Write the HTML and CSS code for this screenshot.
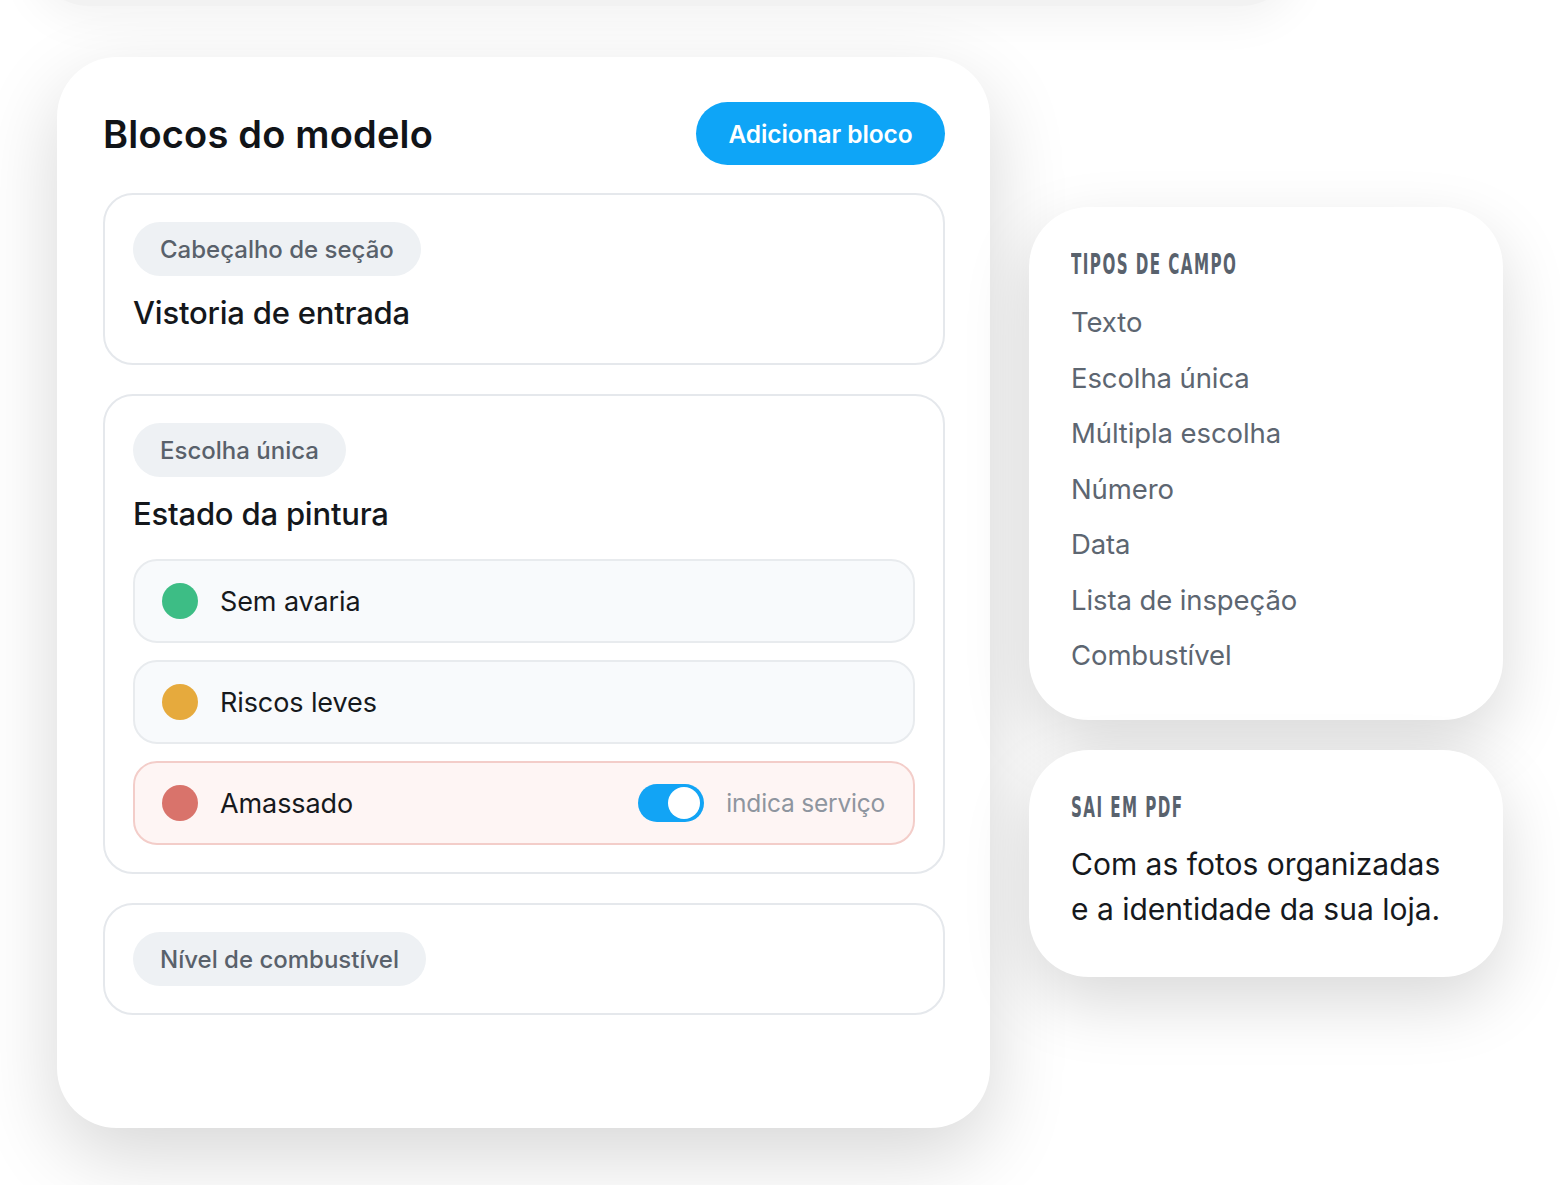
FILE: index.html
```html
<!DOCTYPE html>
<html lang="pt">
<head>
<meta charset="utf-8">
<title>Blocos do modelo</title>
<link rel="stylesheet" href="styles.css">
</head>
<body>
<div class="top-shade"></div>
<div class="stage">
  <section class="main-card">
    <header class="main-head">
      <h1 class="main-title">Blocos do modelo</h1>
      <button class="add-btn">Adicionar bloco</button>
    </header>
    <div class="blocks">
      <div class="block">
        <span class="chip">Cabeçalho de seção</span>
        <div class="block-title">Vistoria de entrada</div>
      </div>
      <div class="block">
        <span class="chip">Escolha única</span>
        <div class="block-title">Estado da pintura</div>
        <div class="options">
          <div class="option">
            <span class="dot dot-green"></span>
            <span class="option-label">Sem avaria</span>
          </div>
          <div class="option">
            <span class="dot dot-orange"></span>
            <span class="option-label">Riscos leves</span>
          </div>
          <div class="option option-alert">
            <span class="dot dot-red"></span>
            <span class="option-label">Amassado</span>
            <span class="toggle"><span class="knob"></span></span>
            <span class="toggle-label">indica serviço</span>
          </div>
        </div>
      </div>
      <div class="block">
        <span class="chip">Nível de combustível</span>
      </div>
    </div>
  </section>
  <aside class="side">
    <div class="side-card types">
      <div class="side-label">TIPOS DE CAMPO</div>
      <ul class="type-list">
        <li>Texto</li>
        <li>Escolha única</li>
        <li>Múltipla escolha</li>
        <li>Número</li>
        <li>Data</li>
        <li>Lista de inspeção</li>
        <li>Combustível</li>
      </ul>
    </div>
    <div class="side-card pdf">
      <div class="side-label">SAI EM PDF</div>
      <p class="pdf-text">Com as fotos organizadas<br>e a identidade da sua loja.</p>
    </div>
  </aside>
</div>
</body>
</html>
```
FILE: styles.css
```css
* { box-sizing: border-box; }
html, body { margin: 0; padding: 0; }
body {
  background: #ffffff;
  font-family: Inter, "Open Sans", sans-serif;
  color: #15181c;
  width: 1560px;
  height: 1185px;
  overflow: hidden;
  position: relative;
}
.top-shade {
  position: absolute;
  left: 30px;
  top: -300px;
  width: 1270px;
  height: 306px;
  background: #f2f2f2;
  border-radius: 0 0 60px 60px;
  box-shadow: 0 14px 44px rgba(0,0,0,0.05);
}
.stage {
  position: relative;
  display: flex;
  align-items: flex-start;
  gap: 39px;
  padding: 57px 0 0 57px;
}
.main-card {
  width: 933px;
  height: 1071px;
  background: #fff;
  border-radius: 60px;
  padding: 45px 45px 0 46px;
  box-shadow: 0 28px 80px rgba(0,0,0,0.16);
}
.main-head {
  display: flex;
  align-items: center;
  justify-content: space-between;
  height: 63px;
}
.main-title {
  margin: 0;
  font-size: 38px;
  font-weight: 600;
  letter-spacing: 0.2px;
  color: #111418;
}
.add-btn {
  height: 63px;
  width: 249px;
  border: none;
  border-radius: 32px;
  background: #0ea5f7;
  color: #fff;
  font-family: inherit;
  font-size: 24.5px;
  font-weight: 600;
  letter-spacing: -0.1px;
}
.blocks {
  margin-top: 28px;
  display: flex;
  flex-direction: column;
  gap: 29px;
}
.block {
  border: 2px solid #e5e8ec;
  border-radius: 30px;
  padding: 27px 28px;
  display: flex;
  flex-direction: column;
  align-items: flex-start;
}
.chip {
  height: 54px;
  padding: 0 27px;
  border-radius: 27px;
  background: #eef1f4;
  color: #59616b;
  font-size: 24px;
  font-weight: 500;
  display: inline-flex;
  align-items: center;
}
.block-title {
  margin-top: 14px;
  font-size: 31px;
  line-height: 46px;
  font-weight: 500;
  letter-spacing: -0.2px;
  color: #14171b;
}
.options {
  margin-top: 22px;
  align-self: stretch;
  display: flex;
  flex-direction: column;
  gap: 17px;
}
.option {
  height: 84px;
  border: 2px solid #e8ebee;
  border-radius: 24px;
  background: #f8fafc;
  display: flex;
  align-items: center;
  padding: 0 28px 0 27px;
}
.option-alert {
  background: #fef5f4;
  border-color: #f3cdc9;
}
.dot {
  width: 36px;
  height: 36px;
  border-radius: 50%;
  flex: none;
}
.dot-green { background: #3dbd85; }
.dot-orange { background: #e6aa3d; }
.dot-red { background: #d9736b; }
.option-label {
  margin-left: 22px;
  font-size: 27px;
  font-weight: 400;
  color: #16191d;
  letter-spacing: -0.1px;
}
.toggle {
  margin-left: auto;
  width: 66px;
  height: 38px;
  border-radius: 19px;
  background: #12a4f5;
  display: flex;
  align-items: center;
  justify-content: flex-end;
  padding: 0 4px;
}
.knob {
  width: 32px;
  height: 32px;
  border-radius: 50%;
  background: #fff;
}
.toggle-label {
  margin-left: 22px;
  font-size: 24.5px;
  color: #8e959f;
  letter-spacing: -0.2px;
}
.side {
  margin-top: 150px;
  width: 474px;
  display: flex;
  flex-direction: column;
  gap: 30px;
}
.side-card {
  background: #fff;
  border-radius: 60px;
  padding: 42px 42px;
  box-shadow: 0 26px 66px rgba(0,0,0,0.15);
}
.types { padding-bottom: 36px; }
.pdf { padding-bottom: 45px; }
.side-label {
  font-family: "DejaVu Sans Condensed", "Liberation Sans Narrow", sans-serif;
  font-weight: 700;
  font-size: 29px;
  line-height: 30px;
  letter-spacing: 2.5px;
  color: #59626d;
  white-space: nowrap;
  transform: scaleX(0.58);
  transform-origin: left center;
}
.type-list {
  list-style: none;
  margin: 16px 0 0;
  padding: 0;
}
.type-list li {
  font-size: 27.5px;
  line-height: 55.5px;
  color: #5d6671;
  letter-spacing: -0.1px;
}
.pdf-text {
  margin: 20px 0 0;
  font-size: 30px;
  line-height: 45px;
  color: #16191d;
  letter-spacing: 0;
}
```
